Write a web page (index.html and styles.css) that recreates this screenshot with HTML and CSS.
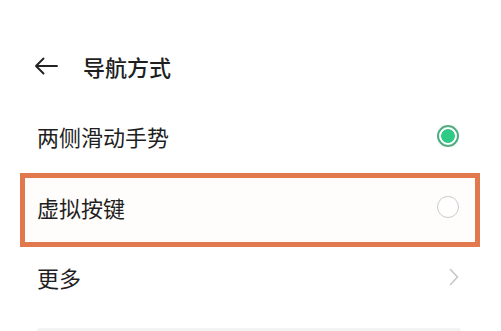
FILE: index.html
```html
<!DOCTYPE html>
<html lang="zh-CN">
<head>
<meta charset="utf-8">
<title>导航方式</title>
<link rel="stylesheet" href="styles.css">
</head>
<body>
<div class="page">
  <header class="header">
    <svg class="back" width="24" height="18" viewBox="0 0 24 18" aria-hidden="true">
      <path d="M23 9H2M9.5 1.5L2 9l7.5 7.5" fill="none" stroke="#222" stroke-width="1.9" stroke-linecap="round" stroke-linejoin="round"/>
    </svg>
    <h1 class="title">导航方式</h1>
  </header>
  <div class="list">
    <div class="row row-first">
      <span class="label">两侧滑动手势</span>
      <span class="radio radio-on"></span>
    </div>
    <div class="row row-boxed">
      <span class="label">虚拟按键</span>
      <span class="radio"></span>
    </div>
    <div class="row row-more">
      <span class="label">更多</span>
      <svg class="chev" width="10" height="18" viewBox="0 0 10 18" aria-hidden="true">
        <path d="M1.5 1.5L8.5 9l-7 7.5" fill="none" stroke="#c6c6c6" stroke-width="1.6" stroke-linecap="round" stroke-linejoin="round"/>
      </svg>
    </div>
  </div>
  <div class="bottom-card"></div>
</div>
</body>
</html>
```
FILE: styles.css
```css
html, body {
  margin: 0;
  padding: 0;
  background: #ffffff;
  overflow: hidden;
}
body {
  font-family: "Noto Sans CJK SC", "Noto Sans", sans-serif;
  color: #1f1f1f;
}
.page {
  width: 501px;
  height: 331px;
  box-sizing: border-box;
  padding-top: 49px;
  overflow: hidden;
}
.header {
  display: flex;
  align-items: center;
  height: 34px;
  padding-left: 34px;
}
.back {
  display: block;
}
.title {
  margin: 0 0 0 25px;
  font-size: 22px;
  font-weight: 500;
  line-height: 34px;
}
.list {
  margin: 23px 0 0 20px;
  width: 460px;
}
.row {
  display: flex;
  align-items: center;
  justify-content: space-between;
  box-sizing: border-box;
  padding: 0 21px 0 17px;
}
.label {
  font-size: 22px;
  line-height: 30px;
}
.row-first {
  height: 60px;
  margin-bottom: 7px;
}
.row-boxed {
  height: 74px;
  border: 5px solid #e2784d;
  background: #fffdfb;
  padding: 0 16px 6px 12px;
}
.row-more {
  height: 60px;
  padding-right: 21px;
}
.radio {
  width: 22px;
  height: 22px;
  box-sizing: border-box;
  border-radius: 50%;
  border: 1.5px solid #cbcbcb;
  background: #fff;
}
.radio-on {
  border: 2px solid #55ab82;
  background: radial-gradient(circle, #2ecb86 0 6.5px, #ffffff 7.2px);
}
.chev {
  display: block;
}
.bottom-card {
  margin: 21px 0 0 37px;
  width: 424px;
  height: 3px;
  background: #f3f3f3;
  border-radius: 3px 3px 0 0;
}
```
